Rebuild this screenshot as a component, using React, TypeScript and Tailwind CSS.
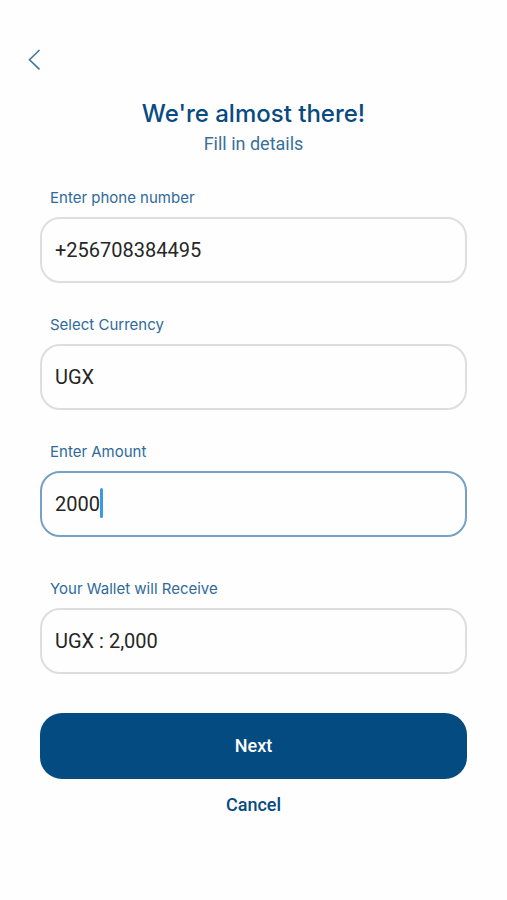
import { useState } from "react";
import type { ReactNode } from "react";

type FieldProps = {
  id: string;
  label: string;
  active?: boolean;
  children: ReactNode;
};

const control =
  "h-full min-w-0 appearance-none bg-transparent text-xl text-[#262626] outline-none";

function Field({ id, label, active = false, children }: FieldProps) {
  return (
    <div className="flex flex-col gap-[9px]">
      <label htmlFor={id} className="pl-2.5 font-[Inter,sans-serif] text-[15px] leading-5 text-[#2f6a9b]">
        {label}
      </label>
      <div
        className={`flex h-[66px] items-center rounded-[20px] border-2 px-[13px] ${
          active ? "border-[#75a1c3]" : "border-[#dedede]"
        }`}
      >
        {children}
      </div>
    </div>
  );
}

export default function App() {
  const [phone, setPhone] = useState("+256708384495");
  const [amount, setAmount] = useState("2000");

  return (
    <main className="min-h-screen bg-[#fefefe] pt-12 pb-20 font-[Roboto,sans-serif]">
      <button type="button" aria-label="Back" className="ml-6 flex size-6 items-center justify-center">
        <svg viewBox="0 0 24 24" className="size-6" fill="none" stroke="#3e76a4" strokeWidth="1.6">
          <path d="M15.5 2 L5.5 11.7 L15.5 21.4" />
        </svg>
      </button>

      <form className="px-10" onSubmit={(event) => event.preventDefault()}>
        <header className="pt-[26px] text-center">
          <h1 className="font-[Inter,sans-serif] text-2xl leading-8 font-medium text-[#094a80]">
            We're almost there!
          </h1>
          <p className="pt-0.5 text-lg leading-6 text-[#397099]">Fill in details</p>
        </header>

        <div className="flex flex-col gap-8 pt-8">
          <Field id="phone" label="Enter phone number">
            <input
              id="phone"
              type="tel"
              value={phone}
              onChange={(event) => setPhone(event.target.value)}
              className={`${control} w-full`}
            />
          </Field>
          <Field id="currency" label="Select Currency">
            <select id="currency" defaultValue="UGX" className={`${control} w-full`}>
              <option value="UGX">UGX</option>
            </select>
          </Field>
          <Field id="amount" label="Enter Amount" active>
            <input
              id="amount"
              inputMode="numeric"
              value={amount}
              onChange={(event) => setAmount(event.target.value)}
              className={`${control} field-sizing-content caret-transparent`}
            />
            <span aria-hidden="true" className="mb-0.5 h-[30px] w-[3px] rounded-full bg-[#3b9ae6]" />
          </Field>
        </div>

        <div className="pt-[42px]">
          <Field id="receive" label="Your Wallet will Receive">
            <input id="receive" readOnly value="UGX : 2,000" className={`${control} w-full`} />
          </Field>
        </div>

        <div className="flex flex-col items-center gap-3 pt-[39px]">
          <button
            type="submit"
            className="h-[66px] w-full rounded-[22px] bg-[#034b80] text-lg font-medium text-white"
          >
            Next
          </button>
          <button type="button" className="px-4 text-lg leading-7 font-medium text-[#094a80]">
            Cancel
          </button>
        </div>
      </form>
    </main>
  );
}
